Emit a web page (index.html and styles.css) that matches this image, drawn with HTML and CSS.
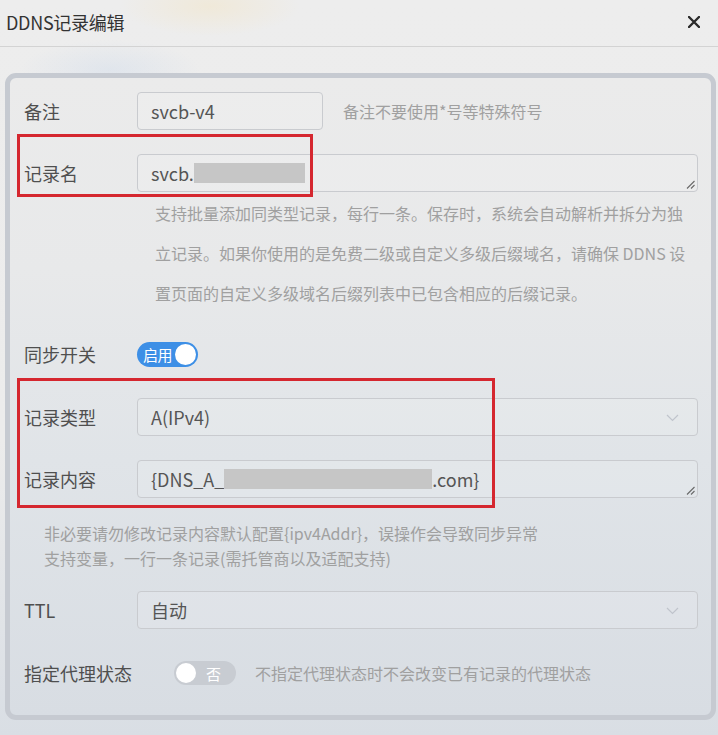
FILE: index.html
```html
<!DOCTYPE html>
<html lang="zh-CN">
<head>
<meta charset="utf-8">
<title>DDNS记录编辑</title>
<link rel="stylesheet" href="styles.css">
</head>
<body>
<div class="dialog">
  <header class="dlg-head">
    <span class="dlg-title">DDNS记录编辑</span>
    <span class="dlg-close" aria-label="关闭">
      <svg width="12" height="12" viewBox="0 0 12 12"><path d="M1 1 L11 11 M11 1 L1 11" stroke="#2b2b2b" stroke-width="2.4" stroke-linecap="round" fill="none"/></svg>
    </span>
  </header>

  <main class="panel">
    <div class="row row-first">
      <label class="lbl">备注</label>
      <div class="field field-short">svcb-v4</div>
      <span class="tip">备注不要使用*号等特殊符号</span>
    </div>

    <div class="row row-gap">
      <label class="lbl">记录名</label>
      <div class="field field-area">svcb.<span class="mask" style="width:111px"></span>
        <svg class="grip" width="9" height="9" viewBox="0 0 9 9"><path d="M8.5 1 L1 8.5 M8.5 5 L5 8.5" stroke="#6a6a6a" stroke-width="1.1" fill="none"/></svg>
      </div>
    </div>
    <p class="help">支持批量添加同类型记录，每行一条。保存时，系统会自动解析并拆分为独立记录。如果你使用的是免费二级或自定义多级后缀域名，请确保 DDNS 设置页面的自定义多级域名后缀列表中已包含相应的后缀记录。</p>

    <div class="row row-switch">
      <label class="lbl">同步开关</label>
      <span class="switch switch-on"><span class="switch-text">启用</span><span class="knob"></span></span>
    </div>

    <div class="row row-type">
      <label class="lbl">记录类型</label>
      <div class="field field-select">A(IPv4)
        <svg class="chev" width="13" height="8" viewBox="0 0 13 8"><path d="M1 1 L6.5 6.5 L12 1" stroke="#c0c4cc" stroke-width="1.2" fill="none"/></svg>
      </div>
    </div>

    <div class="row row-gap">
      <label class="lbl">记录内容</label>
      <div class="field field-area">{DNS_A_<span class="mask" style="width:208px"></span>.com}
        <svg class="grip" width="9" height="9" viewBox="0 0 9 9"><path d="M8.5 1 L1 8.5 M8.5 5 L5 8.5" stroke="#6a6a6a" stroke-width="1.1" fill="none"/></svg>
      </div>
    </div>
    <p class="note">非必要请勿修改记录内容默认配置{ipv4Addr}，误操作会导致同步异常<br>支持变量，一行一条记录(需托管商以及适配支持)</p>

    <div class="row row-ttl">
      <label class="lbl">TTL</label>
      <div class="field field-select">自动
        <svg class="chev" width="13" height="8" viewBox="0 0 13 8"><path d="M1 1 L6.5 6.5 L12 1" stroke="#c0c4cc" stroke-width="1.2" fill="none"/></svg>
      </div>
    </div>

    <div class="row row-proxy">
      <label class="lbl lbl-wide">指定代理状态</label>
      <span class="switch switch-off"><span class="knob"></span><span class="switch-text">否</span></span>
      <span class="tip tip-proxy">不指定代理状态时不会改变已有记录的代理状态</span>
    </div>

    <span class="mark mark-name"></span>
    <span class="mark mark-content"></span>
  </main>
</div>
</body>
</html>
```

FILE: styles.css
```css
* { box-sizing: border-box; }

html, body {
  margin: 0;
  padding: 0;
}

body {
  width: 718px;
  height: 735px;
  overflow: hidden;
  font-family: "Noto Sans CJK SC", "Noto Sans", sans-serif;
  color: #555;
  background:
    radial-gradient(ellipse 90px 30px at 210px 6px, rgba(245, 225, 180, 0.35), transparent),
    radial-gradient(ellipse 90px 30px at 110px 70px, rgba(200, 215, 235, 0.35), transparent),
    linear-gradient(#ededed 0, #ececec 60%, #d9dee4 100%);
}

.dialog {
  display: flex;
  flex-direction: column;
}

.dlg-head {
  height: 47px;
  border-bottom: 1px solid #d3d3d3;
  display: flex;
  align-items: center;
  justify-content: space-between;
  padding: 0 18px 2px 6px;
}

.dlg-title {
  font-size: 18px;
  color: #333;
  letter-spacing: -0.3px;
}

.dlg-close {
  display: flex;
  width: 12px;
  height: 12px;
}

.panel {
  position: relative;
  margin: 26px 2px 0 5px;
  border: 5px solid #c6cad1;
  border-radius: 11px;
  padding: 14px 13px 23px 14px;
  background: linear-gradient(180deg, #ebebeb 0%, #e8e9ea 30%, #e0e4e8 60%, #d8dde3 100%);
}

.row {
  display: flex;
  align-items: center;
  height: 38px;
}

.row-gap { margin-top: 24px; }
.row-switch { margin-top: 22px; }
.row-type { margin-top: 25px; }
.row-ttl { margin-top: 20px; }
.row-proxy { margin-top: 25px; }

.lbl {
  width: 113px;
  flex: none;
  font-size: 18px;
  color: #4f4f4f;
}

.lbl-wide { width: 150px; }

.field {
  position: relative;
  height: 38px;
  display: flex;
  align-items: center;
  padding-left: 13px;
  border: 1px solid #c9cbcf;
  border-radius: 4px;
  background: rgba(255, 255, 255, 0.12);
  font-size: 18px;
  color: #555;
  flex: 1;
}

.field-short {
  flex: none;
  width: 186px;
}

.field-select .chev {
  position: absolute;
  right: 18px;
  top: 15px;
}

.grip {
  position: absolute;
  right: 2px;
  bottom: 2px;
}

.mask {
  display: inline-block;
  height: 20px;
  background: #c6c6c6;
}

.tip {
  font-size: 16px;
  color: #a0a0a0;
  margin-left: 20px;
}

.tip-proxy { margin-left: 19px; }

.help {
  margin: 1px 0 0 131px;
  font-size: 16px;
  line-height: 40px;
  color: #a0a0a0;
  width: 543px;
}

.note {
  margin: 23px 0 0 20px;
  font-size: 16px;
  line-height: 25px;
  color: #a0a0a0;
}

.switch {
  display: inline-flex;
  align-items: center;
  height: 25px;
  border-radius: 13px;
  padding: 0 2px;
}

.switch-on {
  width: 61px;
  background: #3d8fe6;
  justify-content: space-between;
  padding-left: 6px;
}

.switch-off {
  width: 62px;
  background: #c8ccd2;
  justify-content: flex-start;
  height: 24px;
}

.switch-text {
  color: #fff;
  font-size: 15px;
  letter-spacing: -0.5px;
}

.switch-off .switch-text {
  margin-left: 10px;
}

.knob {
  width: 21px;
  height: 21px;
  border-radius: 50%;
  background: #fff;
  flex: none;
}

.switch-off .knob {
  width: 20px;
  height: 20px;
}

.mark {
  position: absolute;
  border: 3px solid #d5272f;
  pointer-events: none;
}

.mark-name {
  left: 7px;
  top: 56px;
  width: 296px;
  height: 63px;
}

.mark-content {
  left: 7px;
  top: 300px;
  width: 478px;
  height: 130px;
}
```
